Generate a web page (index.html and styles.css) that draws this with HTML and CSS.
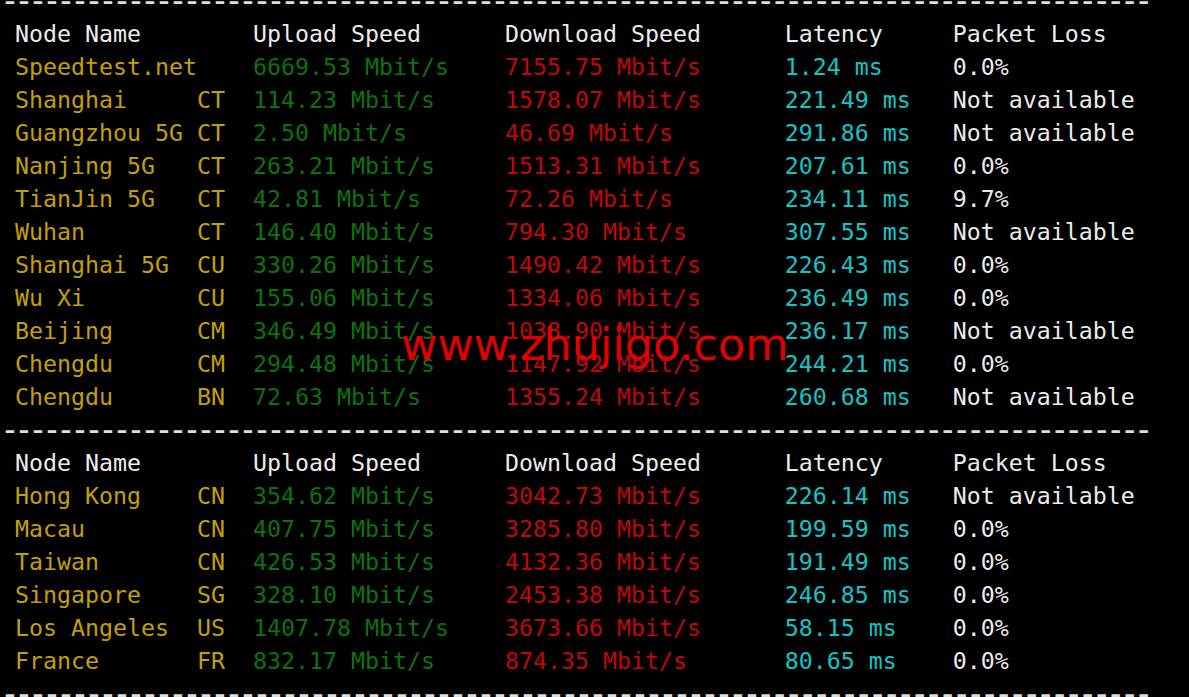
FILE: index.html
```html
<!DOCTYPE html>
<html lang="en">
<head>
  <meta charset="UTF-8" />
  <title>Speed Test Results</title>
  <link rel="stylesheet" href="styles.css">
</head>
<body>
  <div class="term">
    <div class="rule">----------------------------------------------------------------------------------</div>
    <div class="row head"><span> Node Name</span><span>Upload Speed</span><span>Download Speed</span><span>Latency</span><span>Packet Loss</span></div>
    <div class="row"><span class="node"> Speedtest.net</span><span class="up">6669.53 Mbit/s</span><span class="down">7155.75 Mbit/s</span><span class="lat">1.24 ms</span><span class="loss">0.0%</span></div>
    <div class="row"><span class="node"> Shanghai     CT</span><span class="up">114.23 Mbit/s</span><span class="down">1578.07 Mbit/s</span><span class="lat">221.49 ms</span><span class="loss">Not available</span></div>
    <div class="row"><span class="node"> Guangzhou 5G CT</span><span class="up">2.50 Mbit/s</span><span class="down">46.69 Mbit/s</span><span class="lat">291.86 ms</span><span class="loss">Not available</span></div>
    <div class="row"><span class="node"> Nanjing 5G   CT</span><span class="up">263.21 Mbit/s</span><span class="down">1513.31 Mbit/s</span><span class="lat">207.61 ms</span><span class="loss">0.0%</span></div>
    <div class="row"><span class="node"> TianJin 5G   CT</span><span class="up">42.81 Mbit/s</span><span class="down">72.26 Mbit/s</span><span class="lat">234.11 ms</span><span class="loss">9.7%</span></div>
    <div class="row"><span class="node"> Wuhan        CT</span><span class="up">146.40 Mbit/s</span><span class="down">794.30 Mbit/s</span><span class="lat">307.55 ms</span><span class="loss">Not available</span></div>
    <div class="row"><span class="node"> Shanghai 5G  CU</span><span class="up">330.26 Mbit/s</span><span class="down">1490.42 Mbit/s</span><span class="lat">226.43 ms</span><span class="loss">0.0%</span></div>
    <div class="row"><span class="node"> Wu Xi        CU</span><span class="up">155.06 Mbit/s</span><span class="down">1334.06 Mbit/s</span><span class="lat">236.49 ms</span><span class="loss">0.0%</span></div>
    <div class="row"><span class="node"> Beijing      CM</span><span class="up">346.49 Mbit/s</span><span class="down">1038.90 Mbit/s</span><span class="lat">236.17 ms</span><span class="loss">Not available</span></div>
    <div class="row"><span class="node"> Chengdu      CM</span><span class="up">294.48 Mbit/s</span><span class="down">1147.92 Mbit/s</span><span class="lat">244.21 ms</span><span class="loss">0.0%</span></div>
    <div class="row"><span class="node"> Chengdu      BN</span><span class="up">72.63 Mbit/s</span><span class="down">1355.24 Mbit/s</span><span class="lat">260.68 ms</span><span class="loss">Not available</span></div>
    <div class="rule">----------------------------------------------------------------------------------</div>
    <div class="row head"><span> Node Name</span><span>Upload Speed</span><span>Download Speed</span><span>Latency</span><span>Packet Loss</span></div>
    <div class="row"><span class="node"> Hong Kong    CN</span><span class="up">354.62 Mbit/s</span><span class="down">3042.73 Mbit/s</span><span class="lat">226.14 ms</span><span class="loss">Not available</span></div>
    <div class="row"><span class="node"> Macau        CN</span><span class="up">407.75 Mbit/s</span><span class="down">3285.80 Mbit/s</span><span class="lat">199.59 ms</span><span class="loss">0.0%</span></div>
    <div class="row"><span class="node"> Taiwan       CN</span><span class="up">426.53 Mbit/s</span><span class="down">4132.36 Mbit/s</span><span class="lat">191.49 ms</span><span class="loss">0.0%</span></div>
    <div class="row"><span class="node"> Singapore    SG</span><span class="up">328.10 Mbit/s</span><span class="down">2453.38 Mbit/s</span><span class="lat">246.85 ms</span><span class="loss">0.0%</span></div>
    <div class="row"><span class="node"> Los Angeles  US</span><span class="up">1407.78 Mbit/s</span><span class="down">3673.66 Mbit/s</span><span class="lat">58.15 ms</span><span class="loss">0.0%</span></div>
    <div class="row"><span class="node"> France       FR</span><span class="up">832.17 Mbit/s</span><span class="down">874.35 Mbit/s</span><span class="lat">80.65 ms</span><span class="loss">0.0%</span></div>
    <div class="rule">----------------------------------------------------------------------------------</div>
  </div>

  <!-- site watermark over the output -->
  <div class="watermark">www.zhujigo.com</div>
</body>
</html>
```

FILE: styles.css
```css
html, body {
  margin: 0;
  height: 100%;
  overflow: hidden;
  background-color: #000;
}

body {
  position: relative;
}

/* Terminal output */
.term {
  margin-top: -16px;
  padding-left: 1px;
  font-family: "DejaVu Sans Mono", monospace;
  font-size: 23.25px;
  color: #ececec;
}

.row {
  display: grid;
  grid-template-columns: 18ch 18ch 20ch 12ch 1fr;
  height: 33px;
  line-height: 33px;
}

.row span {
  white-space: pre;
}

/* dashed separator: bigger hyphens squeezed to the cell width */
.rule {
  margin-left: -1px;
  height: 33px;
  line-height: 33px;
  font-size: 33px;
  letter-spacing: -5.87px;
  color: #dcdcdc;
  white-space: pre;
  overflow: hidden;
}

.node { color: #c4a000; }
.up   { color: #0c720c; }
.down { color: #c00808; }
.lat  { color: #14c4c8; }
.loss { color: #ececec; }

/* Watermark */
.watermark {
  position: absolute;
  left: 401px;
  top: 323px;
  font-family: "DejaVu Sans", sans-serif;
  font-size: 44.5px;
  line-height: 1;
  color: #e00000;
  white-space: nowrap;
}
```
